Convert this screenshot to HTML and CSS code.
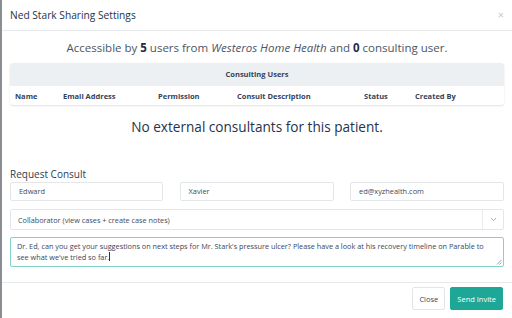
FILE: index.html
```html
<!DOCTYPE html>
<html>
    <head>
        <meta charset="UTF-8">
        <title>Sharing Settings</title>
        <link rel="stylesheet" href="styles.css">
    </head>
    <body>
        <div class="modal">
            <div class="modal-header">
                <h1 class="modal-title">Ned Stark Sharing Settings</h1>
                <span class="close-x">&times;</span>
            </div>
            <div class="modal-body">
                <p class="summary">Accessible by <b>5</b> users from <i>Westeros Home Health</i> and <b>0</b> consulting user.</p>
                <div class="users-table">
                    <div class="table-caption">Consulting Users</div>
                    <div class="table-cols">
                        <span class="col-name">Name</span>
                        <span class="col-email">Email Address</span>
                        <span class="col-perm">Permission</span>
                        <span class="col-desc">Consult Description</span>
                        <span class="col-status">Status</span>
                        <span class="col-by">Created By</span>
                    </div>
                </div>
                <p class="empty">No external consultants for this patient.</p>

                <h2 class="section-title">Request Consult</h2>
                <div class="input-row">
                    <div class="field">Edward</div>
                    <div class="field">Xavier</div>
                    <div class="field">ed@xyzhealth.com</div>
                </div>
                <div class="select">
                    <span>Collaborator (view cases + create case notes)</span>
                    <span class="chevron">
                        <svg width="7" height="5" viewBox="0 0 7 5"><path d="M1 1.2 L3.5 3.6 L6 1.2" fill="none" stroke="#9aa3ad" stroke-width="0.9"/></svg>
                    </span>
                </div>
                <div class="textarea">Dr. Ed, can you get your suggestions on next steps for Mr. Stark's pressure ulcer? Please have a look at his recovery timeline on Parable to see what we've tried so far.<span class="caret"></span>
                    <svg class="grip" width="6" height="6" viewBox="0 0 6 6"><path d="M1 5.5 L5.5 1 M3.5 5.5 L5.5 3.5" stroke="#8a8f96" stroke-width="0.8"/></svg>
                </div>
            </div>
            <div class="modal-footer">
                <button class="btn btn-close">Close</button>
                <button class="btn btn-send">Send Invite</button>
            </div>
        </div>
    </body>
</html>
```

FILE: styles.css
```css
html, body {
    margin: 0;
    padding: 0;
    background: #ffffff;
}

body {
    font-family: "Open Sans", "DejaVu Sans", sans-serif;
    color: #2c3a4f;
    width: 512px;
    height: 318px;
    overflow: hidden;
}

.modal {
    width: 512px;
    height: 318px;
    box-sizing: border-box;
    border-left: 2px solid #8a8e93;
    background: #ffffff;
    display: flex;
    flex-direction: column;
}

.modal-header {
    height: 31px;
    box-sizing: border-box;
    border-bottom: 1px solid #e6e9ec;
    display: flex;
    align-items: center;
    justify-content: space-between;
    padding: 0 8px 0 8px;
}

.modal-title {
    margin: 0;
    font-size: 10.2px;
    font-weight: 400;
    color: #24334a;
}

.close-x {
    font-size: 11px;
    color: #c4c8cc;
    margin-top: -2px;
}

.modal-body {
    padding: 0 8px;
    flex: 1;
}

.summary {
    margin: 8px 0 0 0;
    text-align: center;
    font-size: 11.5px;
    color: #4b5566;
    line-height: 17px;
}

.summary b {
    color: #1f2d44;
}

.users-table {
    margin-top: 7px;
    border-radius: 3px;
    box-shadow: 0 1px 2px rgba(0, 0, 0, 0.12);
    overflow: hidden;
}

.table-caption {
    background: #ecf0f2;
    height: 23px;
    line-height: 23px;
    text-align: center;
    font-size: 7.5px;
    font-weight: 700;
    color: #34425a;
}

.table-cols {
    height: 19px;
    display: flex;
    align-items: center;
    font-size: 7.5px;
    font-weight: 700;
    color: #34425a;
    padding-left: 5px;
}

.col-name { width: 48px; }
.col-email { width: 95px; }
.col-perm { width: 79px; }
.col-desc { width: 127px; }
.col-status { width: 51px; }

.empty {
    margin: 11px 0 0 0;
    text-align: center;
    font-size: 13.6px;
    line-height: 22px;
    color: #25334b;
}

.section-title {
    margin: 29px 0 0 0;
    font-size: 10px;
    font-weight: 400;
    line-height: 14px;
    color: #2f3d52;
}

.input-row {
    display: grid;
    grid-template-columns: 153px 154px 154px;
    justify-content: space-between;
    margin-top: 1px;
}

.field {
    height: 19px;
    box-sizing: border-box;
    border: 1px solid #e4e7ea;
    border-radius: 2px;
    font-size: 7.4px;
    line-height: 17px;
    padding-left: 8px;
    color: #3e4a5c;
}

.select {
    margin-top: 8px;
    height: 21px;
    box-sizing: border-box;
    border: 1px solid #e4e7ea;
    border-radius: 2px;
    display: flex;
    align-items: center;
    justify-content: space-between;
    padding-left: 7px;
    font-size: 7.3px;
    color: #3e4a5c;
}

.chevron {
    width: 20px;
    height: 19px;
    border-left: 1px solid #e9ecef;
    display: flex;
    align-items: center;
    justify-content: center;
}

.textarea {
    position: relative;
    margin-top: 7px;
    height: 30px;
    box-sizing: border-box;
    border: 1px solid #84d3c9;
    border-radius: 2px;
    padding: 3px 6px;
    font-size: 7.3px;
    line-height: 11px;
    color: #3a4658;
}

.caret {
    display: inline-block;
    width: 1px;
    height: 9px;
    background: #333;
    vertical-align: -1px;
}

.grip {
    position: absolute;
    right: 1px;
    bottom: 1px;
}

.modal-footer {
    height: 36px;
    box-sizing: border-box;
    border-top: 1px solid #e6e9ec;
    display: flex;
    justify-content: flex-end;
    align-items: flex-start;
    gap: 5px;
    padding: 4px 9px 0 0;
}

.btn {
    font-family: "Open Sans", "DejaVu Sans", sans-serif;
    height: 23px;
    border-radius: 2px;
    font-size: 7.5px;
    padding: 0 6px;
    cursor: pointer;
}

.btn-close {
    background: #ffffff;
    border: 1px solid #e3e6e9;
    color: #3a4658;
}

.btn-send {
    background: #1ea697;
    border: 1px solid #1ea697;
    color: #ffffff;
}
```
